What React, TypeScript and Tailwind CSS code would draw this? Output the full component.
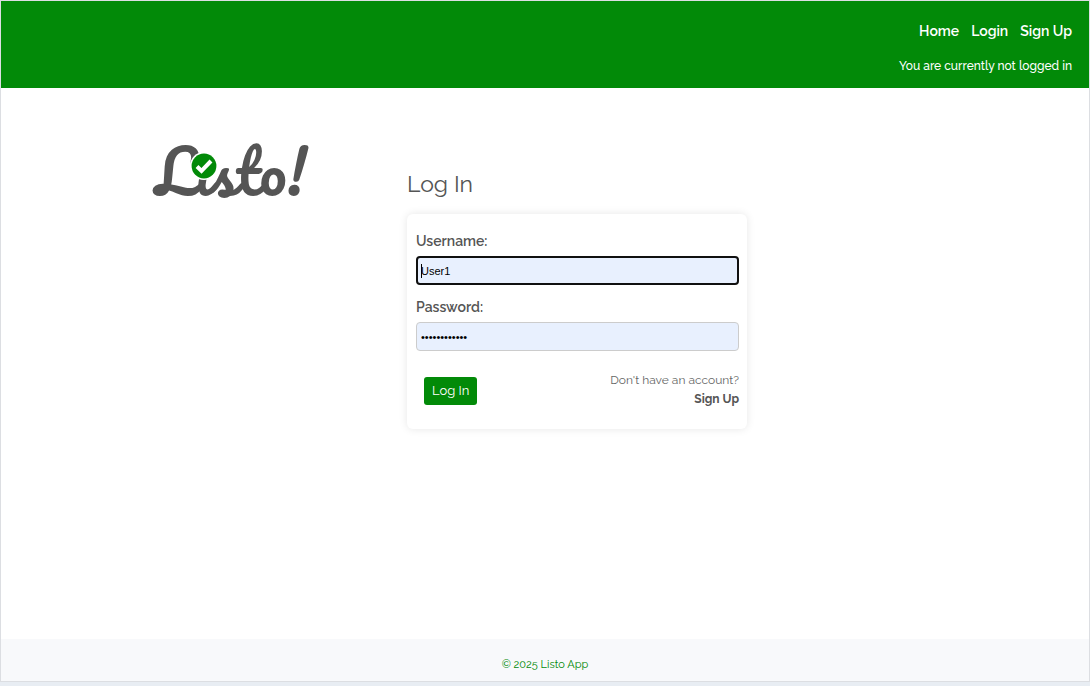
import React from "react";

function Logo() {
  return (
    <svg viewBox="0 0 156 70" className="block h-[70px] w-[156px] overflow-visible" role="img" aria-label="Listo!">
      <text
        x="2"
        y="56"
        fontSize="60"
        fill="#555555"
        className="font-['Pacifico','Lobster','Dancing_Script',cursive]"
      >
        Lısto!
      </text>
      <circle cx="51" cy="26" r="14" fill="#ffffff" />
      <circle cx="51" cy="26" r="12.4" fill="#028a08" />
      <path d="M44 26.5 L48.5 31 L58 21" fill="none" stroke="#ffffff" strokeWidth="4" />
    </svg>
  );
}

function Header() {
  return (
    <header className="flex h-[87px] flex-col items-end bg-[#028a08] px-[17px] pt-5 text-white">
      <nav className="flex gap-3 text-[14px] leading-5 font-semibold">
        <a href="#home">Home</a>
        <a href="#login">Login</a>
        <a href="#signup">Sign Up</a>
      </nav>
      <p className="mt-[15px] text-[12px] leading-5 font-medium">You are currently not logged in</p>
    </header>
  );
}

function LoginForm() {
  return (
    <section className="pt-7">
      <h1 className="text-[23px] leading-8">Log In</h1>
      <form className="mt-[14px] rounded-md pt-[17px] pr-2 pb-5 pl-[9px] shadow-[0_0_8px_rgba(0,0,0,0.1)]">
        <label htmlFor="username" className="block text-[14px] leading-5 font-semibold">
          Username:
        </label>
        <div className="relative mt-[5px]">
          <input
            id="username"
            type="text"
            defaultValue="User1"
            className="block h-[29px] w-full rounded-[4px] border-2 border-[#101010] bg-[#e8f0fe] px-[3px] font-['Liberation_Sans',Arial,sans-serif] text-[11px] text-black outline-none"
          />
          <span className="absolute top-2 left-[5px] h-[14px] w-px bg-black" />
        </div>
        <label htmlFor="password" className="mt-3 block text-[14px] leading-5 font-semibold">
          Password:
        </label>
        <input
          id="password"
          type="password"
          defaultValue="password1234"
          className="mt-[5px] block h-[29px] w-full rounded-[4px] border border-[#cccccc] bg-[#e8f0fe] px-1 font-['Liberation_Sans',Arial,sans-serif] text-[11px] text-black outline-none"
        />
        <div className="mt-5 flex items-start justify-between pl-2">
          <button type="button" className="mt-[6px] h-7 rounded-[3px] bg-[#028a08] px-2 text-[13px] leading-5 text-white">
            Log In
          </button>
          <p className="text-right text-[12px] leading-[19px] text-[#666666]">
            Don't have an account?
            <a href="#signup" className="block font-bold text-[#555555]">
              Sign Up
            </a>
          </p>
        </div>
      </form>
    </section>
  );
}

export default function App() {
  return (
    <div className="flex min-h-screen flex-col bg-[#e8edf3] pb-1 font-['Raleway','Lato',sans-serif] text-[#555555]">
      <div className="flex flex-1 flex-col border border-[#dcdee2] bg-white">
        <Header />
        <main className="flex-1 px-4 pt-[52px] pb-8">
          <div className="mx-auto grid max-w-[784px] grid-cols-[156px_340px_1fr] gap-x-[98px]">
            <Logo />
            <LoginForm />
          </div>
        </main>
        <footer className="flex h-[42px] items-center justify-center bg-[#f8f9fb] pt-[10px] text-[11px] leading-4 text-[#028a08]">
          <p>
            © 2025 <a href="#home">Listo App</a>
          </p>
        </footer>
      </div>
    </div>
  );
}
